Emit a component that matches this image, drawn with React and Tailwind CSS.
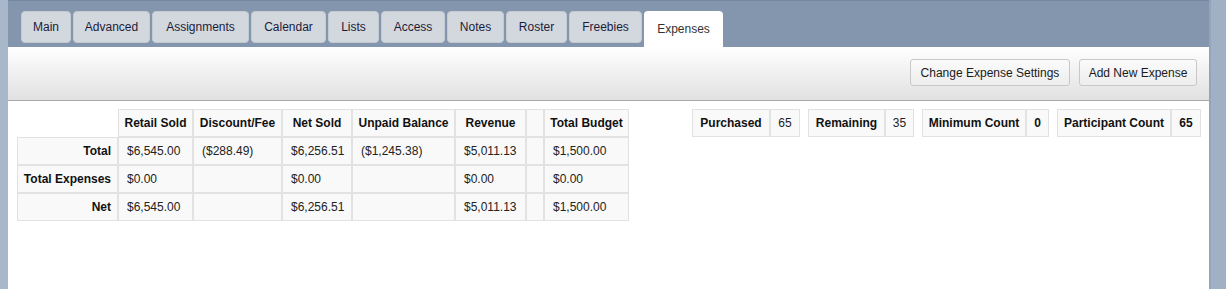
const tabs = [
  { name: "Main", w: "w-[50px]" },
  { name: "Advanced", w: "w-[77px]" },
  { name: "Assignments", w: "w-[97px]" },
  { name: "Calendar", w: "w-[75px]" },
  { name: "Lists", w: "w-[51px]" },
  { name: "Access", w: "w-[64px]" },
  { name: "Notes", w: "w-[57px]" },
  { name: "Roster", w: "w-[61px]" },
  { name: "Freebies", w: "w-[73px]" },
  { name: "Expenses", w: "w-[79px]" },
];

const columns = ["", "Retail Sold", "Discount/Fee", "Net Sold", "Unpaid Balance", "Revenue", "", "Total Budget"];
const widths = [101, 75, 89, 70, 103, 71, 18, 85];

const rows = [
  ["Total", "$6,545.00", "($288.49)", "$6,256.51", "($1,245.38)", "$5,011.13", "", "$1,500.00"],
  ["Total Expenses", "$0.00", "", "$0.00", "", "$0.00", "", "$0.00"],
  ["Net", "$6,545.00", "", "$6,256.51", "", "$5,011.13", "", "$1,500.00"],
];

// label/value cell widths measured off the screenshot
const stats = [
  { label: "Purchased", value: "65", bold: false, lw: "w-[78px]", vw: "w-[28px]" },
  { label: "Remaining", value: "35", bold: false, lw: "w-[77px]", vw: "w-[27px]" },
  { label: "Minimum Count", value: "0", bold: true, lw: "w-[104px]", vw: "w-[21px]" },
  { label: "Participant Count", value: "65", bold: true, lw: "w-[114px]", vw: "w-[28px]" },
];

function Tab({ name, w, active }) {
  if (active) {
    return (
      <div className={"flex h-[36px] items-center justify-center rounded-t-[4px] bg-white text-[#333] " + w}>
        {name}
      </div>
    );
  }
  return (
    <div className={"flex h-[32px] items-center justify-center rounded-[4px] border border-[#c4cad2] bg-[#d3d8de] text-[#1c1c3a] " + w}>
      {name}
    </div>
  );
}

function Button({ children, w }) {
  return (
    <button className={"h-[27px] rounded-[3px] border border-[#c8c8c8] bg-gradient-to-b from-[#fbfbfb] to-[#ededed] text-[12px] text-[#1a1a1a] " + w}>
      {children}
    </button>
  );
}

export default function App() {
  return (
    <div className="flex h-[289px] overflow-hidden bg-[#a8b8ca] font-['Liberation_Sans',Arial,sans-serif] text-[12px] text-[#222]">
      <div className="w-[8px] shrink-0" />
      <div className="flex w-[1201px] shrink-0 flex-col bg-white">
        {/* tab strip */}
        <div className="flex h-[47px] items-start gap-[2px] border-t border-[#73869f] bg-[#8496ae] pl-[13px] pt-[10px]">
          {tabs.map((t) => (
            <Tab key={t.name} name={t.name} w={t.w} active={t.name === "Expenses"} />
          ))}
        </div>

        {/* toolbar */}
        <div className="flex h-[54px] items-start justify-end gap-[9px] border-b border-[#a9a9a9] bg-gradient-to-b from-white to-[#e1e1e1] pr-[12px] pt-[12px]">
          <Button w="w-[160px]">Change Expense Settings</Button>
          <Button w="w-[118px]">Add New Expense</Button>
        </div>

        {/* content */}
        <div className="flex items-start justify-between pl-[9px] pr-[8px] pt-[8px]">
          <table className="w-[612px] table-fixed border-separate border-spacing-0">
            <colgroup>
              {widths.map((w, i) => (
                <col key={i} style={{ width: w }} />
              ))}
            </colgroup>
            <thead>
              <tr>
                {columns.map((c, i) =>
                  i === 0 ? (
                    <th key={i} className="h-[28px]" />
                  ) : (
                    <th
                      key={i}
                      className="h-[28px] border border-[#e2e2e2] bg-[#f9f9f9] px-[4px] text-center font-bold leading-[14px] text-[#111]"
                    >
                      {c}
                    </th>
                  )
                )}
              </tr>
            </thead>
            <tbody>
              {rows.map((r) => (
                <tr key={r[0]}>
                  {r.map((v, i) =>
                    i === 0 ? (
                      <td
                        key={i}
                        className="h-[28px] whitespace-nowrap border border-[#e2e2e2] bg-[#f9f9f9] pr-[6px] text-right font-bold leading-[14px] text-[#111]"
                      >
                        {v}
                      </td>
                    ) : (
                      <td
                        key={i}
                        className="h-[28px] whitespace-nowrap border border-[#e2e2e2] bg-[#f9f9f9] pl-[8px] leading-[14px]"
                      >
                        {v}
                      </td>
                    )
                  )}
                </tr>
              ))}
            </tbody>
          </table>

          <div className="flex gap-[8px]">
            {stats.map((s) => (
              <div key={s.label} className="flex h-[28px] border border-[#e2e2e2] bg-[#f9f9f9]">
                <div className={"flex items-center justify-center border-r-2 border-[#e2e2e2] font-bold text-[#111] " + s.lw}>
                  {s.label}
                </div>
                <div className={"flex items-center justify-center " + s.vw + (s.bold ? " font-bold text-[#111]" : "")}>
                  {s.value}
                </div>
              </div>
            ))}
          </div>
        </div>
      </div>
      <div className="flex-1 border-l-2 border-[#93a5ba] bg-[#a0b1c5]" />
    </div>
  );
}
